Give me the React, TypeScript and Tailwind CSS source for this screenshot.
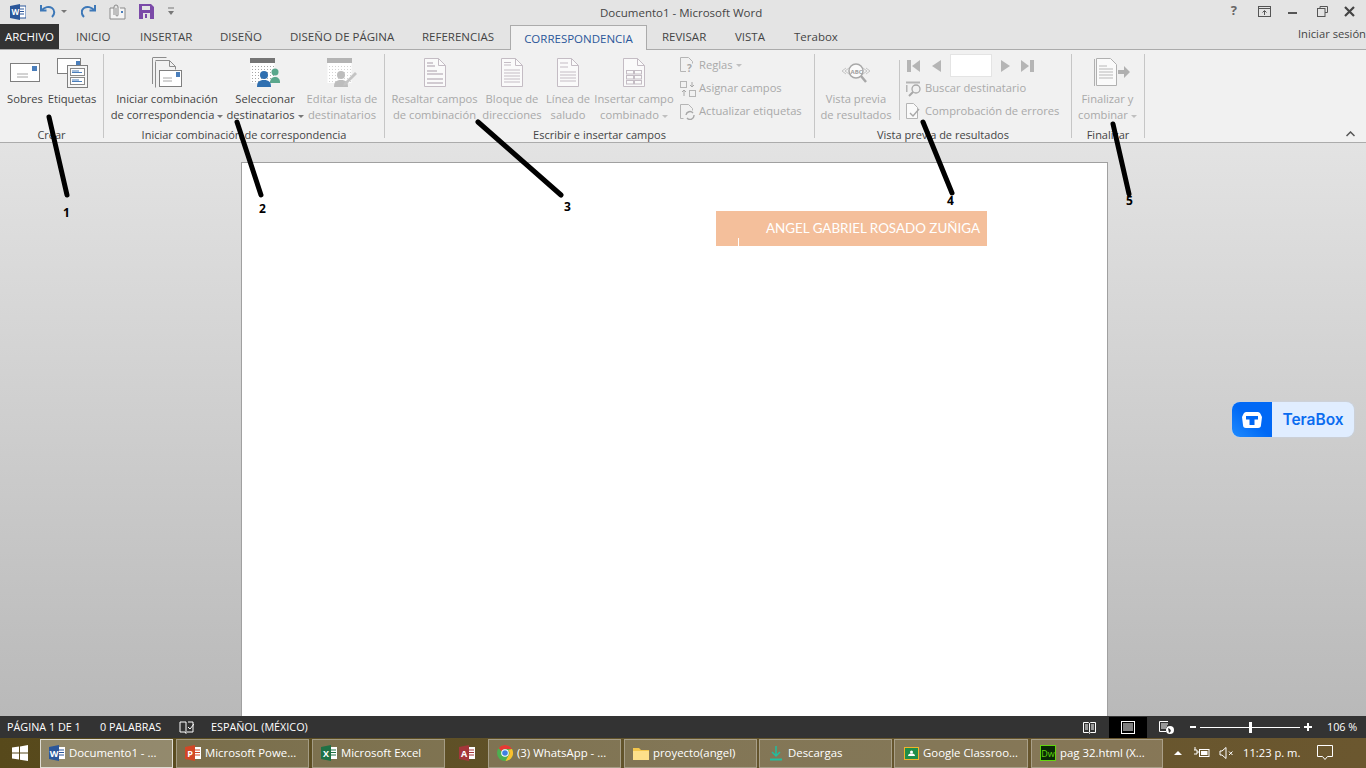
import React from 'react';

const FONT = { fontFamily: '"Open Sans", "Noto Sans", sans-serif' };

const tabs = [
  { label: 'INICIO', x: 'ml-[17px] w-[64px]' },
  { label: 'INSERTAR', x: 'w-[80px]' },
  { label: 'DISEÑO', x: 'w-[70px]' },
  { label: 'DISEÑO DE PÁGINA', x: 'w-[132px]' },
  { label: 'REFERENCIAS', x: 'w-[88px]' },
];

function Doc({ kind }: { kind: 'highlight' | 'block' | 'greeting' | 'field' }) {
  const c = '#c4bcc4';
  return (
    <svg width="22" height="29" viewBox="0 0 22 29" fill="none">
      <path d="M.5.5h14l7 7v21H.5z" fill="#fafafa" stroke={c} />
      <path d="M14.5.5v7h7" stroke={c} />
      {kind === 'highlight' && <path d="M3 5h6M3 8h8M3 13h10M3 16h16M3 21h16M3 25h16" stroke={c} strokeWidth="1.400" />}
      {kind === 'block' && <path d="M3 4.500h7M3 7h7M3 12h16M3 15h16M3 18h16M3 21h16M3 24h16" stroke={c} />}
      {kind === 'greeting' && <path d="M3 5h8M3 9h8M3 14h16M3 17h16M3 20h16M3 23h16" stroke={c} />}
      {kind === 'field' && (
        <g stroke={c}>
          <rect x="3.500" y="12.500" width="7" height="3.500" />
          <rect x="11.500" y="12.500" width="7" height="3.500" />
          <rect x="3.500" y="17.500" width="7" height="3.500" />
          <rect x="11.500" y="17.500" width="7" height="3.500" />
          <rect x="3.500" y="22.500" width="7" height="3.500" />
          <rect x="11.500" y="22.500" width="7" height="3.500" />
        </g>
      )}
    </svg>
  );
}

function Envelope() {
  return (
    <svg width="30" height="19" viewBox="0 0 30 19" fill="none">
      <rect x=".5" y=".5" width="29" height="18" fill="#fff" stroke="#7f7f7f" />
      <rect x="22" y="3" width="5" height="5" fill="#4a7ebb" />
      <path d="M7 11h11M7 14h11" stroke="#a6a6a6" />
    </svg>
  );
}

function LabelsIcon() {
  return (
    <svg width="31" height="30" viewBox="0 0 31 30" fill="none">
      <rect x=".5" y=".5" width="23" height="15" fill="#fff" stroke="#7f7f7f" />
      <rect x="19" y="3" width="4" height="4" fill="#4a7ebb" />
      <rect x="10.500" y="7.500" width="20" height="22" fill="#f6f6f6" stroke="#7f7f7f" />
      <rect x="13.500" y="10.500" width="14" height="7" fill="#fff" stroke="#8a8a8a" />
      <rect x="13.500" y="19.500" width="14" height="7" fill="#fff" stroke="#8a8a8a" />
      <path d="M15 13h7M15 14.500h10M15 22h7M15 23.500h10" stroke="#4a7ebb" />
    </svg>
  );
}

function MergeIcon() {
  return (
    <svg width="30" height="31" viewBox="0 0 30 31" fill="none">
      <path d="M.5 1v26M.5.5h14" stroke="#8c8c8c" />
      <path d="M3.500 4.500v26M3.500 3.500h14l6 6v3" stroke="#8c8c8c" />
      <path d="M17.500 3.500v6h6" stroke="#8c8c8c" />
      <rect x="7.500" y="13.500" width="22" height="16" fill="#fff" stroke="#7f7f7f" />
      <rect x="24" y="15" width="4" height="5" fill="#4a7ebb" />
      <path d="M11 21h9M11 24h9" stroke="#a6a6a6" />
    </svg>
  );
}

function RecipientsIcon({ muted = false, pencil = false }: { muted?: boolean; pencil?: boolean }) {
  const top = muted ? '#b4b4b4' : '#757575';
  const dot = muted ? '#d4d4d4' : '#a6a6a6';
  const blue = muted ? '#bdbdbd' : '#2f6fb0';
  const green = muted ? '#cfcfcf' : '#5aa78c';
  const dots: React.ReactNode[] = [];
  for (let y = 8; y < 24; y += 3) {
    for (let x = 2; x < 24; x += 3) {
      dots.push(<rect key={`${x}-${y}`} x={x} y={y} width="1" height="1" fill={dot} />);
    }
  }
  return (
    <svg width="30" height="29" viewBox="0 0 30 29" fill="none">
      <rect width="25" height="5" fill={top} />
      <rect x=".5" y="5" width="24" height="20" fill="#fff" />
      {dots}
      {!pencil && <circle cx="25" cy="14" r="3.500" fill={green} />}
      {!pencil && <path d="M20 25c0-4 2-6 5-6s5 2 5 5v1z" fill={green} />}
      <circle cx="14" cy="17" r="4" fill={blue} />
      <path d="M7 29c0-5 2-7 7-7s7 2 7 7z" fill={blue} />
      {pencil && <path d="M17 25l11-11 2 2-11 11-3 1z" fill="#c4c4c4" />}
    </svg>
  );
}

function ColButton({
  width,
  icon,
  lines,
  disabled,
  caret,
}: {
  width: string;
  icon: React.ReactNode;
  lines: string[];
  disabled?: boolean;
  caret?: boolean;
}) {
  return (
    <div className={`${width} flex flex-col items-center shrink-0`}>
      <div className="h-[37px] shrink-0 flex items-center justify-center">{icon}</div>
      <div className={`text-[11.2px] leading-[16px] text-center whitespace-nowrap ${disabled ? 'text-[#a9a9a9]' : 'text-[#444444]'}`}>
        {lines.map((l, i) => (
          <div key={l}>
            {l}
            {caret && i === lines.length - 1 && (
              <span className={`inline-block align-middle ml-[3px] w-0 h-0 border-x-[3px] border-x-transparent border-t-[3px] ${disabled ? 'border-t-[#c0c0c0]' : 'border-t-[#777777]'}`} />
            )}
          </div>
        ))}
      </div>
    </div>
  );
}

function Group({ width, label, children }: { width: string; label: string; children: React.ReactNode }) {
  return (
    <div className={`${width} shrink-0 flex flex-col h-[92px] pt-[4px] pb-[4px]`}>
      <div className="flex-1 flex flex-col border-r border-[#c6c6c6] min-h-0">
        <div className="flex-1 flex min-h-0">{children}</div>
        <div className="h-[15px] -mb-[4px] leading-[15px] text-[11px] text-center text-[#444444] whitespace-nowrap">{label}</div>
      </div>
    </div>
  );
}

function SmallRow({ icon, label, caret }: { icon: React.ReactNode; label: string; caret?: boolean }) {
  return (
    <div className="h-[23px] flex items-center text-[11.2px] text-[#a9a9a9] whitespace-nowrap">
      <span className="w-[19px] flex justify-start">{icon}</span>
      {label}
      {caret && <span className="inline-block ml-[3px] w-0 h-0 border-x-[3px] border-x-transparent border-t-[3px] border-t-[#c0c0c0]" />}
    </div>
  );
}

const IconQ = (
  <svg width="15" height="17" viewBox="0 0 15 17" fill="none" overflow="visible">
    <path d="M6 14.500H.5V.5h8l4 4v2" stroke="#b5b5b5" />
    <text x="7" y="15" fontSize="10" fontWeight="700" fill="#a8a8a8">?</text>
  </svg>
);
const IconAssign = (
  <svg width="16" height="16" viewBox="0 0 16 16" fill="none">
    <rect x=".5" y=".5" width="6" height="6" stroke="#b5b5b5" />
    <rect x="9.500" y="9.500" width="6" height="6" stroke="#b5b5b5" />
    <path d="M12 1v5M10 4l2 2 2-2M4 15V9M2 11l2-2 2 2" stroke="#a8a8a8" />
  </svg>
);
const IconRefresh = (
  <svg width="15" height="16" viewBox="0 0 15 16" fill="none">
    <path d="M3.500 14.500h-3V.5h8l4 4v2" stroke="#b5b5b5" />
    <path d="M6 11a4 4 0 0 1 7-2M14 11a4 4 0 0 1-7 3" stroke="#a8a8a8" strokeWidth="1.400" />
  </svg>
);
const IconFind = (
  <svg width="16" height="16" viewBox="0 0 16 16" fill="none">
    <path d="M.5 4v7M0 1.500h14" stroke="#b5b5b5" strokeWidth="2" />
    <circle cx="10" cy="8" r="4" stroke="#a8a8a8" strokeWidth="1.300" />
    <path d="M7 11l-4 4" stroke="#a8a8a8" strokeWidth="2" />
  </svg>
);
const IconCheck = (
  <svg width="15" height="17" viewBox="0 0 15 17" fill="none">
    <path d="M.5.5h7l4 4v11h-11z" stroke="#b5b5b5" fill="#fafafa" />
    <path d="M4 10l3 3 6-7" stroke="#a8a8a8" strokeWidth="1.400" />
  </svg>
);

function NavButtons() {
  return (
    <div className="h-[23px] flex items-center">
      <svg width="14" height="12" viewBox="0 0 14 12" className="ml-[1px]"><rect width="4" height="12" fill="#b5b5b5" /><path d="M13 0v12L5 6z" fill="#b5b5b5" /></svg>
      <svg width="10" height="12" viewBox="0 0 10 12" className="ml-[10px]"><path d="M10 0v12L1 6z" fill="#b5b5b5" /></svg>
      <div className="w-[42px] h-[23px] bg-white border border-[#e4e4e4] ml-[9px]" />
      <svg width="10" height="12" viewBox="0 0 10 12" className="ml-[9px]"><path d="M0 0v12l9-6z" fill="#b5b5b5" /></svg>
      <svg width="13" height="12" viewBox="0 0 13 12" className="ml-[10px]"><path d="M0 0v12l8-6z" fill="#b5b5b5" /><rect x="9" width="4" height="12" fill="#b5b5b5" /></svg>
    </div>
  );
}

function TitleBar() {
  return (
    <div className="h-[25px] flex items-center relative text-[#444444]">
      <div className="w-[600px] flex items-center pl-[10px] -mt-[2px]">
        <svg width="16" height="16" viewBox="0 0 16 16">
          <rect x="7" y="2" width="9" height="12" fill="#fff" stroke="#2b579a" />
          <path d="M9 5h5M9 7.500h5M9 10h5" stroke="#2b579a" />
          <path d="M0 2l10-2v16L0 14z" fill="#2b579a" />
          <text x="1.500" y="11" fontSize="8" fontWeight="700" fill="#fff">W</text>
        </svg>
        <svg width="17" height="15" viewBox="0 0 17 15" fill="none" className="ml-[14px]">
          <path d="M1 1v5.500h5.500" stroke="#3d78b8" strokeWidth="2" />
          <path d="M2 6c2.500-3 7-4 10-2 3 2 3 6 0 9" stroke="#3d78b8" strokeWidth="2" />
        </svg>
        <span className="ml-[4px] w-0 h-0 border-x-[3px] border-x-transparent border-t-[3px] border-t-[#777777]" />
        <svg width="15" height="15" viewBox="0 0 15 15" fill="none" className="ml-[14px]">
          <path d="M14 1v5.500H8.500" stroke="#3d78b8" strokeWidth="2" />
          <path d="M13 6c-2.500-3-7-4-10-2-3 2-3 6 0 9" stroke="#3d78b8" strokeWidth="2" />
        </svg>
        <svg width="17" height="17" viewBox="0 0 17 17" fill="none" className="ml-[13px]">
          <path d="M5 5H1v11h15V5h-5" stroke="#8a8a8a" fill="#f4f4f4" />
          <path d="M5 12V4a2 2 0 0 1 4 0v8a1 1 0 0 1-2 0V5" stroke="#8a8a8a" />
          <rect x="12" y="8" width="2" height="2" fill="#4a7ebb" />
        </svg>
        <svg width="15" height="15" viewBox="0 0 15 15" className="ml-[13px]">
          <path d="M0 0h12l3 3v12H0z" fill="#7b4aa8" />
          <rect x="3" y="2" width="8" height="4" fill="#e4e4e4" />
          <rect x="4" y="9" width="7" height="6" fill="#e4e4e4" />
          <rect x="6" y="10" width="2" height="4" fill="#7b4aa8" />
        </svg>
        <svg width="6" height="9" viewBox="0 0 6 9" className="ml-[14px]">
          <path d="M0 1h6" stroke="#777777" />
          <path d="M0 4h6L3 8z" fill="#777777" />
        </svg>
      </div>
      <span className="text-[11.5px]">Documento1 - Microsoft Word</span>
      <div className="ml-auto flex items-center pr-[11px] -mt-[3px]">
        <span className="text-[13px] font-bold text-[#666666] mr-[21px]">?</span>
        <svg width="13" height="11" viewBox="0 0 13 11" fill="none" className="mr-[17px]">
          <rect x=".5" y=".5" width="12" height="10" stroke="#555555" />
          <path d="M0 2.500h13" stroke="#555555" />
          <path d="M6.500 9V5M4.500 6.500l2-2 2 2" stroke="#555555" />
        </svg>
        <div className="w-[9px] h-[2px] bg-[#555555] mr-[20px] mt-[3px]" />
        <svg width="11" height="11" viewBox="0 0 11 11" fill="none" className="mr-[16px]">
          <path d="M3 2.500V.5h7.500v6H8" stroke="#555555" />
          <rect x=".5" y="2.500" width="7.500" height="8" stroke="#555555" />
        </svg>
        <svg width="11" height="11" viewBox="0 0 11 11" fill="none">
          <path d="M1 1l9 9M10 1l-9 9" stroke="#444444" strokeWidth="2.200" />
        </svg>
      </div>
    </div>
  );
}

function TabsRow() {
  return (
    <div className="h-[25px] flex items-end border-b border-[#ababab] relative text-[11.5px] text-[#444444]">
      <div className="w-[59px] h-[25px] bg-[#333333] text-white flex items-center justify-center pt-[1px]">ARCHIVO</div>
      {tabs.map((t) => (
        <div key={t.label} className={`${t.x} h-[25px] pt-[1px] flex items-center whitespace-nowrap`}>
          {t.label}
        </div>
      ))}
      <div className="w-[137px] h-[25px] -mb-[1px] pt-[1px] bg-[#f1f1f1] border border-b-0 border-[#ababab] text-[#2b579a] flex items-center justify-center">
        CORRESPONDENCIA
      </div>
      <div className="ml-[15px] w-[73px] h-[25px] pt-[1px] flex items-center">REVISAR</div>
      <div className="w-[59px] h-[25px] pt-[1px] flex items-center">VISTA</div>
      <div className="h-[25px] pt-[1px] flex items-center">Terabox</div>
      <div className="ml-auto h-[25px] pb-[5px] flex items-center text-[11.2px]">Iniciar sesión</div>
    </div>
  );
}

function Ribbon() {
  return (
    <div className="h-[93px] bg-[#f1f1f1] border-b border-[#ababab] flex relative">
      <Group width="w-[104px]" label="Crear">
        <div className="w-[2px]" />
        <ColButton width="w-[46px]" icon={<Envelope />} lines={['Sobres']} />
        <ColButton width="w-[48px]" icon={<LabelsIcon />} lines={['Etiquetas']} />
      </Group>
      <Group width="w-[281px]" label="Iniciar combinación de correspondencia">
        <div className="w-[5px]" />
        <ColButton width="w-[116px]" icon={<MergeIcon />} lines={['Iniciar combinación', 'de correspondencia']} caret />
        <ColButton width="w-[80px]" icon={<RecipientsIcon />} lines={['Seleccionar', 'destinatarios']} caret />
        <ColButton width="w-[74px]" disabled icon={<RecipientsIcon muted pencil />} lines={['Editar lista de', 'destinatarios']} />
      </Group>
      <Group width="w-[430px]" label="Escribir e insertar campos">
        <div className="w-[4px]" />
        <ColButton width="w-[91px]" disabled icon={<Doc kind="highlight" />} lines={['Resaltar campos', 'de combinación']} />
        <ColButton width="w-[64px]" disabled icon={<Doc kind="block" />} lines={['Bloque de', 'direcciones']} />
        <ColButton width="w-[48px]" disabled icon={<Doc kind="greeting" />} lines={['Línea de', 'saludo']} />
        <ColButton width="w-[84px]" disabled caret icon={<Doc kind="field" />} lines={['Insertar campo', 'combinado']} />
        <div className="ml-[4px] flex flex-col">
          <SmallRow icon={IconQ} label="Reglas" caret />
          <SmallRow icon={IconAssign} label="Asignar campos" />
          <SmallRow icon={IconRefresh} label="Actualizar etiquetas" />
        </div>
      </Group>
      <Group width="w-[257px]" label="Vista previa de resultados">
        <div className="w-[2px]" />
        <ColButton
          width="w-[78px]"
          disabled
          icon={
            <svg width="30" height="20" viewBox="0 0 30 20" fill="none">
              <circle cx="15" cy="8" r="7" stroke="#a8a8a8" strokeWidth="1.500" fill="#fafafa" />
              <text x="9.500" y="10.500" fontSize="6" fontWeight="700" fill="#a0a0a0">ABC</text>
              <path d="M20 13l5 6" stroke="#a8a8a8" strokeWidth="2.500" />
              <path d="M5 5L1 8l4 3M8 5L4 8l4 3M25 5l4 3-4 3M22 5l4 3-4 3" stroke="#c4c4c4" />
            </svg>
          }
          lines={['Vista previa', 'de resultados']}
        />
        <div className="w-[1px] h-[60px] bg-[#c6c6c6] ml-[4px] mt-[6px]" />
        <div className="ml-[6px] flex flex-col">
          <NavButtons />
          <SmallRow icon={IconFind} label="Buscar destinatario" />
          <SmallRow icon={IconCheck} label="Comprobación de errores" />
        </div>
      </Group>
      <Group width="w-[73px]" label="Finalizar">
        <ColButton
          width="w-[71px]"
          disabled
          caret
          icon={
            <svg width="42" height="29" viewBox="0 0 42 29" fill="none" className="ml-[14px]">
              <path d="M.5 1v27M2.500.5h14l6 6v21h-20z" stroke="#b0b0b0" fill="#fafafa" />
              <path d="M5 8h8M5 11h14M5 14h14M5 17h14M5 20h14" stroke="#b8b8b8" />
              <path d="M24 13h6V9l6 6-6 6v-4h-6z" fill="#b0b0b0" transform="translate(0 -1)" />
            </svg>
          }
          lines={['Finalizar y', 'combinar']}
        />
      </Group>
      <svg width="9" height="6" viewBox="0 0 9 6" fill="none" className="absolute right-[11px] bottom-[5px]">
        <path d="M.5 5l4-4 4 4" stroke="#555555" strokeWidth="1.500" />
      </svg>
    </div>
  );
}

function DocArea() {
  return (
    <div className="flex-1 min-h-0 bg-gradient-to-b from-[#e3e3e3] to-[#b9b9b9] pt-[19px] overflow-hidden">
      <div className="ml-[241px] w-[867px] h-[600px] bg-white border border-[#a0a0a0] pt-[48px]">
        <div
          style={{ fontFamily: 'Lato, sans-serif' }}
          className="ml-[474px] w-[271px] h-[35px] bg-[#f4bf9b] relative flex items-center justify-end pr-[7px] text-[13.4px] text-white whitespace-nowrap"
        >
          ANGEL GABRIEL ROSADO ZUÑIGA
          <div className="absolute left-[22px] bottom-0 w-[1px] h-[8px] bg-white" />
        </div>
      </div>
    </div>
  );
}

function StatusBar() {
  return (
    <div className="h-[22px] bg-[#333333] text-white text-[10.8px] flex items-center relative">
      <span className="ml-[7px] w-[93px]">PÁGINA 1 DE 1</span>
      <span className="w-[79px]">0 PALABRAS</span>
      <svg width="15" height="14" viewBox="0 0 15 14" fill="none">
        <path d="M7 2H1v10h5l1 1.500V2zM9 2h5v10H8" stroke="#fff" />
        <path d="M9 7l2 2 4-5" stroke="#fff" />
      </svg>
      <span className="ml-[17px]">ESPAÑOL (MÉXICO)</span>
      <div className="ml-auto flex items-center h-[22px] pr-[9px]">
        <svg width="13" height="13" viewBox="0 0 13 13" fill="none">
          <path d="M.5 1.500h5l1 1 1-1h5v10h-5l-1 1-1-1h-5zM6.500 2.500v9M2 4h3M2 6h3M2 8h3M8 4h3M8 6h3M8 8h3" stroke="#fff" />
        </svg>
        <div className="w-[38px] h-[21px] bg-black ml-[13px] flex items-center justify-center">
          <svg width="14" height="13" viewBox="0 0 14 13" fill="none">
            <rect x=".5" y=".5" width="13" height="12" stroke="#fff" />
            <path d="M2 3h10M2 5h10M2 7h10M2 9h10" stroke="#fff" />
          </svg>
        </div>
        <svg width="15" height="13" viewBox="0 0 15 13" fill="none" className="ml-[12px]">
          <path d="M9 .5H.5v10H7M2 3h7M2 5h6M2 7h5" stroke="#fff" />
          <circle cx="11" cy="9" r="4" fill="#fff" />
          <path d="M9 7l2 1 1 2-2 2z" fill="#333333" />
        </svg>
        <div className="ml-[16px] flex items-center">
          <div className="w-[6px] h-[2px] bg-white" />
          <div className="ml-[4px] w-[100px] h-[1px] bg-white relative">
            <div className="absolute left-[49px] -top-[5px] w-[3px] h-[11px] bg-white" />
          </div>
          <div className="ml-[4px] relative w-[8px] h-[8px]">
            <div className="absolute top-[3px] left-0 w-[8px] h-[2px] bg-white" />
            <div className="absolute left-[3px] top-0 h-[8px] w-[2px] bg-white" />
          </div>
        </div>
        <span className="ml-[15px] w-[30px] whitespace-nowrap">106 %</span>
      </div>
    </div>
  );
}

function Btn({ width, icon, label, active, ml }: { width: string; icon: React.ReactNode; label: string; active?: boolean; ml: string }) {
  return (
    <div
      className={`${width} ${ml} h-[29px] shrink-0 flex items-center pl-[8px] gap-[4px] border text-[11.4px] text-white whitespace-nowrap overflow-hidden ${
        active ? 'bg-white/35 border-white/70' : 'bg-white/20 border-white/30'
      }`}
    >
      <span className="w-[16px] flex justify-center shrink-0">{icon}</span>
      {label}
    </div>
  );
}

function AppIcon({ bg, letter }: { bg: string; letter: string }) {
  return (
    <svg width="16" height="16" viewBox="0 0 16 16">
      <rect x="8" y="2" width="8" height="12" fill="#fff" />
      <path d="M10 5h5M10 7.500h5M10 10h5" stroke={bg} />
      <path d="M0 2l10-2v16L0 14z" fill={bg} />
      <text x="5" y="11.500" textAnchor="middle" fontSize="9" fontWeight="700" fill="#fff">{letter}</text>
    </svg>
  );
}

function Taskbar() {
  return (
    <div className="h-[30px] bg-gradient-to-r from-[#57491b] via-[#63542c] to-[#6b572f] flex items-center relative">
      <div className="w-[40px] flex justify-center">
        <svg width="16" height="16" viewBox="0 0 16 16" fill="#fff">
          <path d="M0 2.500l7-1v6H0zM8 1.400l8-1.300v7.400H8zM0 8.500h7v6l-7-1zM8 8.500h8v7.400l-8-1.200z" />
        </svg>
      </div>
      <Btn ml="ml-0" width="w-[133px]" active icon={<AppIcon bg="#2b579a" letter="W" />} label="Documento1 - ..." />
      <Btn ml="ml-[3px]" width="w-[133px]" icon={<AppIcon bg="#d24726" letter="P" />} label="Microsoft Powe..." />
      <Btn ml="ml-[3px]" width="w-[133px]" icon={<AppIcon bg="#1e7145" letter="X" />} label="Microsoft Excel" />
      <div className="w-[43px] flex justify-center shrink-0">
        <AppIcon bg="#a4373a" letter="A" />
      </div>
      <Btn
        ml="ml-0"
        width="w-[133px]"
        icon={
          <svg width="16" height="16" viewBox="0 0 16 16">
            <circle cx="8" cy="8" r="8" fill="#4caf50" />
            <path d="M8 0a8 8 0 0 1 7 4H8a4 4 0 0 0-3.600 2.200L1.600 3A8 8 0 0 1 8 0z" fill="#e53935" />
            <path d="M15 4a8 8 0 0 1-6.500 12l3-5.500A4 4 0 0 0 11 5z" fill="#fbc02d" />
            <circle cx="8" cy="8" r="3.800" fill="#fff" />
            <circle cx="8" cy="8" r="2.800" fill="#3f7fe0" />
          </svg>
        }
        label="(3) WhatsApp - ..."
      />
      <Btn
        ml="ml-[3px]"
        width="w-[133px]"
        icon={
          <svg width="16" height="13" viewBox="0 0 16 13">
            <path d="M0 1h6l2 2h8v10H0z" fill="#f3c64c" />
            <rect y="4" width="16" height="9" fill="#fde08a" />
          </svg>
        }
        label="proyecto(angel)"
      />
      <Btn
        ml="ml-[2px]"
        width="w-[133px]"
        icon={
          <svg width="14" height="15" viewBox="0 0 14 15" fill="none">
            <path d="M7 0v10M3 6l4 4 4-4" stroke="#1fbf9f" strokeWidth="1.500" />
            <path d="M1 13.500h12" stroke="#1fbf9f" strokeWidth="2" />
          </svg>
        }
        label="Descargas"
      />
      <Btn
        ml="ml-[2px]"
        width="w-[134px]"
        icon={
          <svg width="15" height="13" viewBox="0 0 15 13">
            <rect x=".5" y=".5" width="14" height="12" fill="#1f8e49" stroke="#f0b429" />
            <circle cx="7.500" cy="5" r="1.500" fill="#fff" />
            <path d="M4 9c0-2 2-2.500 3.500-2.500S11 7 11 9z" fill="#fff" />
          </svg>
        }
        label="Google Classroo..."
      />
      <Btn
        ml="ml-[3px]"
        width="w-[132px]"
        icon={
          <svg width="16" height="16" viewBox="0 0 16 16">
            <rect x=".5" y=".5" width="15" height="15" fill="#0a2a05" stroke="#62d60e" />
            <text x="8" y="11.500" textAnchor="middle" fontSize="9" fill="#62d60e">Dw</text>
          </svg>
        }
        label="pag 32.html (X..."
      />
      <div className="flex items-center text-white text-[11.2px] ml-[11px]">
        <span className="w-0 h-0 border-x-[4px] border-x-transparent border-b-[4px] border-b-white" />
        <svg width="16" height="11" viewBox="0 0 16 11" fill="none" className="ml-[12px]">
          <rect x="5.500" y="2.500" width="9.500" height="7" stroke="#fff" />
          <rect x="7" y="4" width="6.500" height="4" fill="#fff" />
          <path d="M0 3h3v4H0M1 0v3M3 5h2" stroke="#fff" />
        </svg>
        <svg width="15" height="12" viewBox="0 0 15 12" fill="none" className="ml-[9px]">
          <path d="M1 4h2l4-3.500v11L3 8H1z" stroke="#fff" />
          <path d="M10 4.500l3.500 3.500M13.500 4.500L10 8" stroke="#fff" />
        </svg>
        <span className="ml-[9px] whitespace-nowrap">11:23 p. m.</span>
        <svg width="16" height="15" viewBox="0 0 16 15" fill="none" className="ml-[17px]">
          <path d="M.5.5h15v11h-5l-2.500 3-2.500-3h-5z" stroke="#fff" />
        </svg>
      </div>
    </div>
  );
}

const strokes = [
  'M49 117L67 195',
  'M237 122L261 195',
  'M478 122L561 195',
  'M923 122L952 193',
  'M1113 124L1129 194',
];

const marks = [
  { n: '1', cls: 'left-[63px] top-[205px]' },
  { n: '2', cls: 'left-[259px] top-[201px]' },
  { n: '3', cls: 'left-[564px] top-[199px]' },
  { n: '4', cls: 'left-[947px] top-[193px]' },
  { n: '5', cls: 'left-[1126px] top-[193px]' },
];

export default function App() {
  return (
    <div style={FONT} className="w-[1366px] h-[768px] flex flex-col overflow-hidden relative bg-[#e4e4e4]">
      <TitleBar />
      <TabsRow />
      <Ribbon />
      <DocArea />
      <StatusBar />
      <Taskbar />

      {/* hand drawn annotations */}
      <svg width="1366" height="768" className="absolute inset-0 pointer-events-none" fill="none">
        {strokes.map((d) => (
          <path key={d} d={d} stroke="#000" strokeWidth="5" strokeLinecap="round" />
        ))}
      </svg>
      {marks.map((m) => (
        <span key={m.n} className={`absolute ${m.cls} text-[12px] leading-[16px] font-bold text-black`}>
          {m.n}
        </span>
      ))}

      <div className="absolute left-[1232px] top-[402px] w-[122px] h-[35px] rounded-[8px] overflow-hidden flex bg-[#e0edff] shadow-[0_0_2px_#c4d6ee]">
        <div className="w-[40px] bg-gradient-to-tr from-[#1f8bff] via-[#0068f5] to-[#0068f5] flex items-center justify-center">
          <svg width="20" height="16" viewBox="0 0 20 16">
            <path d="M4 0h12q1.500 0 2.300 1.500L20 5l-1 8a3 3 0 0 1-3 3H4a3 3 0 0 1-3-3L0 5l1.700-3.500Q2.500 0 4 0z" fill="#fff" />
            <path d="M4 4h12v3.500h-3.500V13h-5V7.500H4z" fill="#0068f5" />
          </svg>
        </div>
        <div className="flex-1 flex items-center justify-center text-[15.5px] font-semibold text-[#0a6cf0]" style={{ fontFamily: 'Inter, sans-serif' }}>
          TeraBox
        </div>
      </div>
    </div>
  );
}
